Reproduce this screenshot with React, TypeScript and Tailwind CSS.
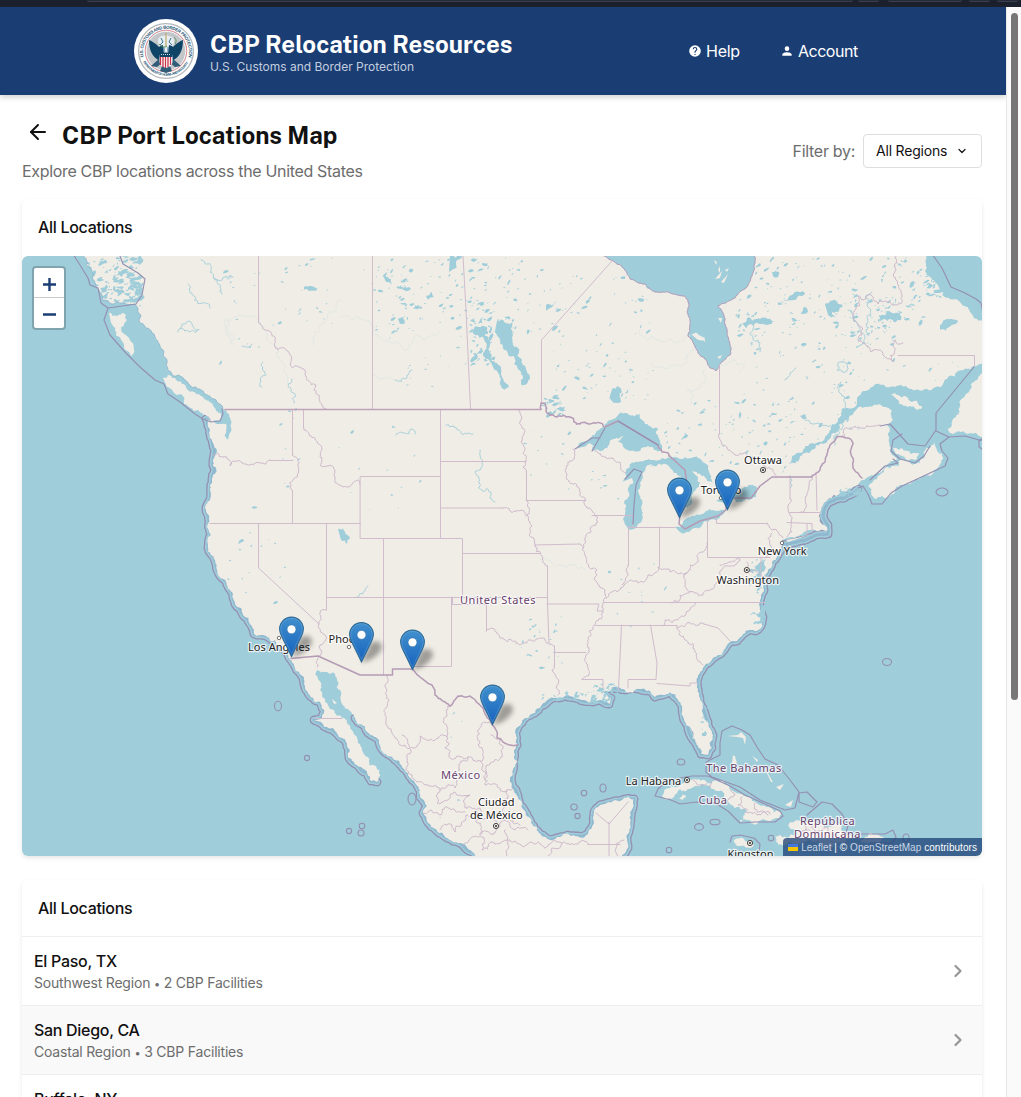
import React from 'react';
import { ArrowLeft, ChevronDown, ChevronRight } from 'lucide-react';

type Pt = [number, number];

const parse = (s: string): Pt[] =>
  s.trim().split(/\s+/).map((p) => p.split(',').map(Number) as Pt);

function makeRandom(seed: number) {
  let s = seed;
  return () => {
    s = (s * 1664525 + 1013904223) % 4294967296;
    return s / 4294967296;
  };
}

// Fractal subdivision of a polyline, for natural coastlines and rivers.
function rough(s: string, amp = 0.22): Pt[] {
  const pts = parse(s);
  const rnd = makeRandom(Math.round(pts[0][0] * 131 + pts[0][1] * 17));
  const out: Pt[] = [pts[0]];
  const split = (a: Pt, b: Pt) => {
    const dx = b[0] - a[0];
    const dy = b[1] - a[1];
    if (Math.hypot(dx, dy) < 2.2) {
      out.push(b);
      return;
    }
    const k = (rnd() - 0.5) * 2 * amp;
    const m: Pt = [(a[0] + b[0]) / 2 - dy * k, (a[1] + b[1]) / 2 + dx * k];
    split(a, m);
    split(m, b);
  };
  for (let i = 1; i < pts.length; i++) split(pts[i - 1], pts[i]);
  return out;
}

const toPath = (pts: Pt[], close = false) =>
  'M' + pts.map((p) => `${p[0].toFixed(1)} ${p[1].toFixed(1)}`).join('L') + (close ? 'Z' : '');

const line = (s: string, amp = 0.22) => toPath(rough(s, amp));
const area = (s: string, amp = 0.22) => toPath(rough(s, amp), true);

const PANHANDLE =
  '83,256 87,266 92,272 95,283 99,290 103,300 113,304 122,303 135,304 138,310 139,320 146,328 152,333 158,342 163,350 167,360 169,371 176,376 186,381 196,387 205,394 214,399 220,404 223,409';
const PUGET = '223,409 229,414 231,424 229,436 227,440 225,434 226,424 222,424 214,422 206,419';
const WEST =
  '206,419 209,428 212,440 213,460 212,480 210,500 206,510 209,522 211,535 208,548 215,560 217,570 226,582 232,592 235,604 243,615 251,625 254,634 266,636 275,640 281,647 288,655 294,664 301,675 305,688 310,696 320,702 324,712 322,718 314,720 325,727 337,734 346,742 349,758 357,765 367,773 371,781 377,782';
const GULF_CALIFORNIA =
  '377,782 380,776 376,766 369,765 362,750 355,735 349,725 342,718 334,710 325,702 320,690 317,670 325,672 337,678 341,695 349,710 355,718';
const PACIFIC_MX =
  '355,718 365,726 368,733 379,740 380,746 392,757 402,767 412,780 420,790 420,797 427,806 423,813 427,821 437,831 447,838 460,843 472,852 480,858';
const CARIBBEAN =
  '622,858 628,848 627,840 629,830 631,820 633,808 634,799 622,800 612,802 600,805 594,812 593,825 588,834 575,836 560,837 550,840 539,833 531,823 525,811 518,797 512,785 513,770 514,752 517,745';
const GULF =
  '517,745 516,735 518,727 524,719 535,713 541,706 553,698 565,696 578,699 592,702 600,700 609,704 611,698 603,692 612,688 625,690 640,689 650,691 655,697 663,695 670,692 678,700 682,706 683,716 688,726 692,738 697,745 701,754 708,755 712,748 713,735 708,722 703,708 699,695 697,685';
const ATLANTIC =
  '697,685 700,673 706,664 715,657 724,650 729,643 737,641 743,634 751,630 756,631 762,623 763,617 760,608 760,600 764,590 763,580 767,573 772,563 778,555 783,545';
const NEW_ENGLAND =
  '783,545 782,540 788,538 800,535 812,530 818,531 827,531 827,527 821,523 819,515 821,510 824,503 830,498 838,495 850,490 858,485 863,480 868,477';
const FUNDY = '868,477 875,474 884,468 894,461 897,459 891,448 889,438 890,428 884,425 880,426';
const LAWRENCE =
  '880,426 889,424 893,420 892,411 882,406 868,407 855,411 845,420 838,431 828,440 814,449 804,453 790,464 781,473 803,452 820,442 832,424 843,408 857,403 862,392 872,387 890,387 910,389 925,389 940,387 955,377 965,369 974,366 984,360';
const LABRADOR = '984,322 974,318 968,307 960,302 945,295 938,285 930,277 926,264 926,254';
const NOVA_SCOTIA =
  '901,459 893,466 880,475 872,483 871,492 877,499 886,498 895,490 909,484 921,477 934,471 943,463 941,455 929,458 920,463 909,461';
const CAPE_BRETON = '924,456 927,448 935,443 937,451 943,459 938,464 928,463';
const NEWFOUNDLAND =
  '985,374 974,382 966,394 960,406 956,416 952,425 948,430 953,434 970,433 985,436';
const VANCOUVER =
  '163,378 172,378 182,384 194,392 204,399 214,407 221,414 221,419 213,421 204,415 194,411 184,404 174,393 167,387';
const HAIDA = '109,313 117,316 126,315 124,325 129,338 134,350 132,356 124,346 116,334 111,323';
const HUDSON =
  '598,254 613,261 625,270 630,279 645,284 655,292 670,293 685,296 688,300 687,312 690,325 688,336 697,350 706,360 710,368 716,371 722,362 730,355 730,345 727,330 724,315 718,306 735,298 746,288 752,276 754,254';

const mainland = toPath(
  [
    PANHANDLE, PUGET, WEST, GULF_CALIFORNIA, PACIFIC_MX, CARIBBEAN, GULF, ATLANTIC,
    NEW_ENGLAND, FUNDY, LAWRENCE, LABRADOR,
  ].flatMap((s) => rough(s)),
  true
);

const CUBA =
  '662,796 670,788 684,783 693,779 704,780 716,780 729,787 741,794 752,801 766,807 782,814 779,818 765,820 748,820 740,822 745,815 747,811 734,808 728,801 724,793 712,789 700,786 695,786 690,789 680,789 674,797 664,798';
const HISPANIOLA =
  '790,822 797,820 806,822 818,823 832,826 846,834 852,838 842,843 822,843 804,842 790,842 776,841 775,836 786,837 797,837 796,830 788,826';
const islands = [
  VANCOUVER, HAIDA, NOVA_SCOTIA, CAPE_BRETON, NEWFOUNDLAND, CUBA, HISPANIOLA,
  '678,798 682,794 686,796 683,800', '734,842 740,838 750,840 754,845 745,847 737,846',
  '891,394 898,395 910,401 922,406 921,409 910,406 899,401', '892,446 899,450 911,454 919,453 917,459 905,458 896,454',
  '860,842 868,836 884,838 880,844', '733,755 737,762 736,765 732,764',
];

const lakes = [
  '575,449 583,442 592,436 600,429 607,423 613,419 619,414 628,414 640,414 645,424 652,428 658,429 659,438 661,451 654,450 648,446 640,451 630,451 623,446 618,441 624,437 616,438 608,446 600,451 592,450 594,446 582,447',
  '622,482 626,472 630,464 638,462 645,460 652,460 659,464 649,467 643,475 640,487 642,505 642,515 640,523 634,529 627,527 625,515 624,502 628,488 632,478',
  '655,462 662,458 672,457 680,459 690,458 702,461 709,472 714,484 707,481 700,474 692,470 698,479 699,487 695,491 692,500 687,508 684,502 686,488 679,476 670,467 662,465',
  '675,527 683,523 692,516 703,514 718,511 727,508 724,513 710,520 701,527 690,531 680,532',
  '716,501 720,497 733,493 740,490 757,488 757,492 752,499 740,502 725,503',
  '497,321 503,320 510,325 513,334 518,348 522,360 527,371 528,382 525,385 521,384 520,371 514,356 508,355 503,346 498,337 495,331',
  '482,334 487,336 488,349 491,360 497,363 501,374 509,386 503,389 500,381 497,371 490,362 485,350 485,342',
  '474,328 487,327 488,334 480,338 473,334',
  '612,389 618,386 622,392 621,402 614,403 610,396',
  '338,529 343,528 347,535 350,538 347,544 341,540',
  '879,315 889,311 900,313 901,320 890,319 881,323',
  '940,325 950,319 958,321 949,327 940,330',
  '742,323 756,319 774,321 768,325 754,325 746,328',
  '780,301 792,295 805,294 795,300', '799,313 805,307 808,311 803,314',
  '825,304 837,302 843,306 832,312 836,318 828,315',
  '426,296 432,292 434,297 428,300', '398,319 403,317 405,323 400,324',
  '700,333 703,330 707,334 703,336', '304,287 311,286 318,289 316,291 304,290',
  '450,256 462,256 457,267 449,272', '383,275 391,279 392,284 386,282',
  '546,305 556,301 553,306 546,311', '800,416 805,414 807,418 803,419',
  '702,733 706,731 706,736 702,736', '772,272 779,272 778,277 773,276',
];

// Lake-strewn regions: x, y, width, height, count, largest size.
const specklands: number[][] = [
  [372, 258, 170, 75, 150, 2.6], [540, 275, 110, 70, 50, 2], [470, 300, 25, 65, 60, 3],
  [545, 350, 110, 60, 50, 2], [541, 395, 22, 20, 34, 2.6], [735, 258, 110, 80, 90, 2.3],
  [840, 258, 85, 70, 80, 2.2], [740, 330, 120, 110, 75, 2.1], [270, 258, 100, 70, 24, 1.8],
  [665, 400, 130, 65, 70, 2], [850, 300, 45, 50, 50, 2.2], [925, 262, 30, 35, 90, 3.4],
  [120, 256, 22, 50, 80, 3.6], [85, 258, 40, 44, 80, 3.4], [220, 256, 40, 110, 16, 1.6],
  [380, 330, 90, 75, 14, 1.7], [520, 430, 50, 60, 10, 2], [590, 470, 30, 30, 8, 1.7],
  [225, 500, 60, 110, 18, 2], [330, 410, 90, 100, 12, 1.6], [520, 610, 50, 60, 22, 2],
  [590, 684, 28, 18, 50, 2.6], [540, 692, 60, 8, 24, 2.6], [700, 690, 8, 40, 8, 1.7],
  [840, 488, 28, 8, 40, 2.6], [750, 560, 16, 34, 30, 2.6], [280, 400, 20, 100, 10, 1.8],
  [600, 560, 70, 80, 12, 1.5], [860, 345, 100, 36, 12, 1.8], [400, 700, 100, 130, 10, 1.6],
];

const specks = (() => {
  const rnd = makeRandom(4242);
  let d = '';
  for (const [x, y, w, h, n, big] of specklands) {
    for (let i = 0; i < n; i++) {
      const cx = x + rnd() * w;
      const cy = y + rnd() * h;
      const size = 0.6 + rnd() * rnd() * big;
      const tilt = rnd() * 1.6 - 1.2;
      const steps = 7;
      for (let k = 0; k < steps; k++) {
        const a = (k / steps) * Math.PI * 2;
        const r = size * (0.4 + rnd() * 0.9);
        const px = Math.cos(a) * r * 1.5;
        const py = Math.sin(a) * r * 0.7;
        const qx = cx + px * Math.cos(tilt) - py * Math.sin(tilt);
        const qy = cy + px * Math.sin(tilt) + py * Math.cos(tilt);
        d += `${k ? 'L' : 'M'}${qx.toFixed(1)} ${qy.toFixed(1)}`;
      }
      d += 'Z';
    }
  }
  return d;
})();

const rivers = [
  '201,260 210,272 214,279 218,284 222,294', '214,278 224,277 233,277', '188,284 192,293 202,303 210,308',
  '178,332 183,324 191,322 199,329 190,332 180,329', '242,346 252,344', '262,387 266,375 263,362', '294,403 291,389 292,379',
  '395,380 407,378 412,370', '396,435 404,433 412,429 415,434', '446,425 454,426 461,433 473,434',
  '480,450 482,464 479,483 491,492 495,502', '835,445 842,420 845,408 842,396 841,382', '842,362 847,364 847,370 842,372 837,370 838,364 842,362',
  '785,380 790,373 796,368', '804,417 818,423 832,427', '790,476 790,488', '453,776 467,778', '357,597 364,592 368,586',
  '848,310 857,323 862,333 857,347', '750,318 753,340 760,352', '868,335 867,305 872,292',
];
const faintRivers = [
  '340,317 360,319 374,327 391,343 408,350 416,335 440,331', '228,318 226,330 233,345 228,320 240,315 262,325 275,345 285,365 290,390',
  '313,345 320,325 336,310 341,300', '640,330 660,340 690,336', '650,362 668,369 690,352 697,350', '740,373 745,365 720,364',
  '690,405 687,390 705,370', '372,375 395,380', '540,560 560,565 585,570',
];

const straightBorders =
  'M225 409.5H541 M258.5 256V322 M372.5 256V409 M463 256L466 310L470.5 409 M612 261L541.5 340V404 M719.5 365V434 M898 355.5H974.5V366 ' +
  'M292.5 410V455 M292.5 491V523.5 M270 460.5H293 M210 523.5H360.5 M303.5 410V427 M360.5 476.5H440.5V538.5H360.5Z M440.5 410V476 ' +
  'M440.5 461.5H526 M440.5 508H502 M440.5 538.5H462.5V597.5 M462.5 553.5H540 M258.5 523.5V568L319 624 M326.5 523.5V610 ' +
  'M326.5 597.5H547 M383.5 538.5V675 M451.5 597.5V666.5H412 M452.5 597V604.5H486.5V631 M547.5 566V604L549 643 M547 604H599L597 611H603 ' +
  'M554.5 646V666 M554 652.5H586 M526.5 472V500.5H586 M535 545L580 544 M592 515.5H633V527 M628.5 527V565 M659.5 527V567 M628 527.5H675 ' +
  'M707.5 518V557.5H770 M604 602.5H765 M596 625.5H677 M582 679.5H603V688 M621.5 625L618.5 690 M650.5 625L657 663L656 679.5H628V688 ' +
  'M657 683.5L690 686V683H697 M716.5 517V523.5H767 M761 557V576L768 577 M790 476L790 498 M790 512.5H820 M787 522.5L812 523.5V532 M807 524V534 ' +
  'M816 472L817 510 M315 718.5H342 M704 624L718 628L730 641 M609 822V856 M588 844.5H620 M596 813L609 824L628 802';

const wiggles = [
  '258.5,322 265,330 275,337 290,355 305,373 316,385 320,400 326,409', '212,456 223,457 230,466 250,465 270,460',
  '292.5,455 298,466 293,480 290,487 292.5,491', '303.5,427 310,436 322,450 320,465 328,466 335,478 340,485 352,484 357,480 360,484',
  '502,508 510,511 520,511 526,516', '326,610 320,611 319,623 325,635 320,645 318,656', '486,631 500,638 515,641 530,640 548,643 554,646',
  '554,666 559,680 558,695', '518,410 521,425 523,445 526,461 523,467 526,472', '526,500 527,515 530,530 535,545 542,556 547,566',
  '573,449 574,459 568,465 568,480 580,490 585,500 587,508 598,522 590,533 586,542 583,548',
  '580,544 583,548 585,555 597,570 595,580 605,590 607,598 603,610 595,625 588,640 586,655 588,665 582,679',
  '595,451 605,457 620,462 626,473', '628,565 628,575 622,585', '608,597 617,592 625,584 638,583 648,575 658,567 670,572 680,573 687,573 690,565 698,558 705,550 707,543',
  '687,573 685,582 695,593 710,590 720,575 735,565 740,559 730,562 720,565', '747,562 760,575', '672,603 690,592', '695,603 690,610 665,620 664,625',
  '677,627 685,640 695,652 703,665', '677,627 690,623 704,624', '767,523 772,530 783,538', '772,533 770,545 772,553 765,558',
  '790,498 788,512 787,537', '812,475 808,490 801,512', '719,434 722,445 735,455 755,459 770,468 776,475',
  '896,256 896,270 898,285 902,295 897,305 885,301 878,304 868,295 862,300 858,296 860,305 853,312 859,325 862,335 858,340 867,346 871,352 883,355 893,362 895,350 894,340 903,343',
  '845,437 847,428 863,428 880,425',
  '318,658 317,667', '387,675 386,688 389,700 385,715 388,728 395,738 405,745 411,750 407,762', '402,735 413,748 420,736 435,740 447,737 443,722 446,710 452,705',
  '447,737 450,758 468,757 480,761 478,745 478,730 485,722 491,722', '407,762 412,775 425,785 440,790 455,788 460,770 468,757',
  '440,790 437,803 448,800 455,792 470,795 465,808 480,808 476,820', '480,761 486,773 485,785 500,790 507,790 513,788', '491,735 503,748 490,763 485,780',
  '423,814 440,815 448,808 465,812', '440,830 452,825 455,832 466,815 476,822 480,835 495,833 505,820 515,830 528,830', '463,845 480,836 482,850 500,843 510,840 530,842 545,848',
  '507,790 503,805 510,820 520,825', '475,810 483,820 490,815 497,822', '505,830 508,845 507,856', '545,848 555,840 562,843', '548,856 553,848 570,845 588,844',
  '618,856 617,843 624,840', '693,780 700,785 707,783', '712,781 710,788', '730,790 735,795 728,800', '742,797 738,805 748,810', '755,803 757,812 768,815', '745,812 757,815 770,814',
  '803,822 806,830 800,836 810,842', '812,823 815,831 822,834 818,842', '806,830 815,831 828,828 834,838',
];

const national =
  line('541,409 541,403 545,404 547,413 560,416 570,417 580,424 590,424 605,427', 0.28) +
  'M605 427L618 421L658 445' +
  line('658,445 662,452 668,453 675,461', 0.2) +
  'M675 461L685 470L687 485L686 505L680 515L679 524L685 529L700 521L718 516L726 510L726 498H751L760 486L772 477H812' +
  line('812,476 820,470 825,462 827,455 832,443 837,437 848,438 853,443 853,468 862,478', 0.14) +
  'M291 658.5L318 656L360 675H392.5V669H412' +
  line('412,669 420,677 432,685 435,695 450,706 458,696 470,696 480,705 485,714 491,722 497,738 518,745', 0.12);

const maritime =
  'M73 254L80 265L88 278L90 285L98 288L101 303L108 308L104 320L110 335L125 352L140 367L155 380L164 384L168 394L180 402L195 414L203 419L211 422L220 421L223 414L222 409' +
  'M120 256L123 264L138 273L145 279L142 295L136 304L108 308' +
  'M655 796L658 789L667 781L680 778L692 776L708 776L730 786L745 795L765 804L780 811L783 816L775 822L755 822L740 823L728 811L715 803L697 802L680 804L671 800Z' +
  'M722 731L732 726L742 730L750 735L757 747L765 759L778 765L790 780L799 792L795 808L785 810L760 800L740 787L712 777L706 772L706 762L720 755V743Z' +
  'M799 793L807 792L817 802L813 807L799 802Z M807 815L822 802L832 804L842 814L848 825L845 838 M861 834H885L893 830L896 837L892 843H870' +
  'M618 421L658 445 M592 451L605 428 M575 449L592 438H600 M633 524L634 505L636 485L642 472L634 469L625 479' +
  'M974 367L936 413V430L925 446L908 444L899 434L890 424L880 426 M936 431L949 437L940 444L942 451L948 458L945 466L930 473L915 480L902 486L891 493L882 504H872L868 494L863 486L858 488' +
  'M949 437L965 436L979 440L985 438 M985 439L979 441V447L985 451 M893 459L898 463L885 466L870 480 M902 434L893 440L891 451L900 459L915 463L924 456L930 446' +
  'M932 254L942 268L951 287L965 293L976 299L981 303L983 313 M730 842L732 836L740 835L754 838L760 844L759 853';

const mapCircles: number[][] = [
  [887, 662, 4.5, 3.5], [278, 706, 3.5, 4.8], [307, 758, 2.6, 2.6], [349, 831, 2.6, 2.6], [362, 826, 2.8, 2.8], [361, 833, 3, 3],
  [681, 762, 3.8, 3], [584, 793, 2.8, 2.8], [603, 788, 3, 4], [574, 807, 3.2, 3], [577.5, 816, 2.6, 2.6], [699, 827, 4.4, 3.4],
  [715, 822, 5, 2.8], [669, 850, 2.8, 2.8], [771, 838, 2.8, 2.8], [906, 838, 3, 4], [412, 799, 4, 6], [942, 492, 6, 4],
];

type Label = { text: string; x: number; y: number; kind?: 'country' };
const labels: Label[] = [
  { text: 'Ottawa', x: 763, y: 463.5 }, { text: 'Toronto', x: 721, y: 494 }, { text: 'New York', x: 782.3, y: 554.5 },
  { text: 'Washington', x: 747.8, y: 584 }, { text: 'Los Angeles', x: 279, y: 651 }, { text: 'Phoenix', x: 349.5, y: 643 },
  { text: 'Ciudad', x: 496.3, y: 806 }, { text: 'de México', x: 496.3, y: 819 }, { text: 'La Habana', x: 653.5, y: 784.5 },
  { text: 'Kingston', x: 750.5, y: 857.5 },
  { text: 'United States', x: 498, y: 604, kind: 'country' }, { text: 'México', x: 460.8, y: 779, kind: 'country' },
  { text: 'The Bahamas', x: 744, y: 772, kind: 'country' }, { text: 'Cuba', x: 713, y: 804, kind: 'country' },
  { text: 'República', x: 827.5, y: 825, kind: 'country' }, { text: 'Dominicana', x: 827.5, y: 838, kind: 'country' },
];
const capitals: Pt[] = [[763, 470], [746.8, 570], [496, 826], [687, 780], [750, 843]];
const cities: Pt[] = [[782, 543], [721, 498], [279, 638], [349, 647]];
const pins: Pt[] = [[679.5, 518], [727.5, 510], [291.5, 657], [361.5, 662.5], [412.5, 670], [492.5, 725]];

const coastBuffers = [WEST, PACIFIC_MX, CARIBBEAN, GULF, ATLANTIC, '783,545 800,541 816,535 828,534 828,525 824,519 824,510 828,503 836,499 850,495 858,489'].map((s) => line(s, 0.1));

function LocationsMap() {
  return (
    <svg className="block h-[600px] w-full" viewBox="22 256 960 600" role="img" aria-label="Map of CBP port locations">
      <defs>
        <linearGradient id="pin" x1="0" y1="0" x2="0" y2="1">
          <stop offset="0" stopColor="#4190ce" />
          <stop offset="1" stopColor="#1562bd" />
        </linearGradient>
        <filter id="soft" x="-50%" y="-50%" width="200%" height="200%">
          <feGaussianBlur stdDeviation="2.6" />
        </filter>
      </defs>
      <rect x="22" y="256" width="960" height="600" fill="#9fcdd9" />
      <g fill="none" strokeLinejoin="round" strokeLinecap="round">
        {coastBuffers.map((d, i) => <path key={i} d={d} stroke="#9490b3" strokeWidth="8.8" />)}
        {coastBuffers.map((d, i) => <path key={i} d={d} stroke="#9fcdd9" strokeWidth="6.2" />)}
        {coastBuffers.map((d, i) => <path key={i} d={d} stroke="#90b9d0" strokeWidth="3" />)}
      </g>
      <g fill="#f0ede6">
        <path d={mainland} />
        {islands.map((s) => <path key={s} d={area(s, 0.3)} />)}
        <path d="M786 540L797 538L812 534L800 538L788 542Z" />
      </g>
      <g fill="#9fcdd9">
        <path d={area(HUDSON, 0.12)} />
        {lakes.map((s) => <path key={s} d={area(s, 0.26)} />)}
        <path d={specks} />
        <path d={area('763,560 766,568 761,577 762,588 756,590 758,575 755,569 759,563', 0.3)} />
        <path d={area('766,605 752,612 750,616 761,617 753,624 764,624', 0.3)} />
      </g>
      <g fill="#f0ede6">
        <path d={area('691,334 697,333 705,338 706,343 698,340', 0.2)} />
        <path d="M714 260L717 262L716 265ZM718 270L720 266L720 273ZM715 279L722 271L720 278ZM721 282L728 274L724 283ZM725 270L729 268L727 272Z" />
        <path d={area('641,474 646,467 652,464 650,470 645,476', 0.2)} />
        <path d="M727 736L738 735L741 732L746 737L745 745L743 738L738 737ZM752 756L758 760L757 762ZM764 767L773 782L771 782ZM776 787L784 784L780 790ZM785 805L793 800L791 807Z" />
        <path d="M332 699L337 703L334 704ZM344 703L347 707L345 709ZM718 318H722L721 323ZM717 357L722 355L720 359Z" />
      </g>
      <g fill="none" strokeLinejoin="round" strokeLinecap="round">
        {rivers.map((s) => <path key={s} d={line(s, 0.35)} stroke="#a9d1db" strokeWidth="1" />)}
        {faintRivers.map((s) => <path key={s} d={line(s, 0.3)} stroke="#e0e6e3" strokeWidth="0.9" />)}
        <path d={toPath(rough(HUDSON, 0.12))} stroke="#b09ab8" strokeWidth="1" />
        <path d={toPath(rough(PANHANDLE))} stroke="#8fb4cb" strokeWidth="0.8" />
        <path d={straightBorders} stroke="#d0bccd" strokeWidth="1" />
        {wiggles.map((s) => <path key={s} d={line(s, 0.3)} stroke="#c9b3c8" strokeWidth="0.9" />)}
        <path d="M225 409.5H541" stroke="#bea3bb" strokeWidth="1.6" />
        <path d={national} stroke="#b59bb6" strokeWidth="1.5" />
        <path d={maritime} stroke="#9490b3" strokeWidth="1.15" />
        {mapCircles.map(([cx, cy, rx, ry]) => (
          <ellipse key={`${cx}-${cy}`} cx={cx} cy={cy} rx={rx} ry={ry} stroke="#9490b3" strokeWidth="1.1" />
        ))}
      </g>
      {cities.map(([x, y]) => <circle key={x} cx={x} cy={y} r="1.7" fill="#fff" stroke="#555" strokeWidth="0.8" />)}
      {capitals.map(([x, y]) => (
        <g key={x}>
          <circle cx={x} cy={y} r="2.6" fill="#f5f2ec" stroke="#333" strokeWidth="0.9" />
          <circle cx={x} cy={y} r="1.1" fill="#333" />
        </g>
      ))}
      <g
        className="font-['Noto_Sans',sans-serif] text-[11px]"
        textAnchor="middle"
        stroke="#fff"
        strokeOpacity="0.75"
        strokeWidth="2.4"
        strokeLinejoin="round"
        paintOrder="stroke"
      >
        {labels.map((l) => (
          <text key={l.text} x={l.x} y={l.y} fill={l.kind ? '#68416d' : '#222'} letterSpacing={l.kind ? 0.52 : 0.04}>
            {l.text}
          </text>
        ))}
      </g>
      {pins.map(([x, y]) => (
        <path key={x} d={`M${x} ${y}L${x + 9} ${y - 20}Q${x + 22} ${y - 24} ${x + 20} ${y - 13}Q${x + 13} ${y - 2} ${x} ${y}Z`} fill="#000" opacity="0.34" filter="url(#soft)" />
      ))}
      {pins.map(([x, y]) => (
        <g key={x} transform={`translate(${x - 12.5} ${y - 40.5})`}>
          <path d="M12.5 .6C5.8 .6 .6 6 .6 12.6c0 3.2 1.2 5.7 2.6 8.4L12.5 40l9.3-19c1.4-2.7 2.6-5.2 2.6-8.4C24.4 6 19.2 .6 12.5 .6Z" fill="url(#pin)" stroke="#2e6c97" strokeWidth="1.1" />
          <path d="M12.5 1.8C6.4 1.8 1.8 6.6 1.8 12.6c0 2.9 1 5.2 2.5 7.9l8.2 16.8 8.2-16.8c1.5-2.7 2.5-5 2.5-7.9 0-6-4.6-10.8-10.7-10.8Z" fill="none" stroke="#fff" strokeOpacity="0.14" />
          <circle cx="12.5" cy="12.8" r="4.4" fill="#fff" stroke="#2e6c97" strokeOpacity="0.6" strokeWidth="0.8" />
        </g>
      ))}
    </svg>
  );
}

function Seal() {
  return (
    <svg className="size-16 shrink-0" viewBox="0 0 64 64" aria-label="CBP seal">
      <defs>
        <path id="sealTop" d="M9.6 38A23 23 0 1 1 54.4 38" />
        <path id="sealBottom" d="M7.8 39A25.4 25.4 0 0 0 56.2 39" />
      </defs>
      <circle cx="32" cy="32" r="32" fill="#fff" />
      <circle cx="32" cy="32" r="27.4" fill="#fff" stroke="#b4b8bc" strokeWidth="1.3" />
      <circle cx="32" cy="32" r="20.8" fill="#c3c7ca" stroke="#e0838d" strokeWidth="0.9" />
      <circle cx="32" cy="32" r="19.7" fill="none" stroke="#fff" strokeWidth="0.8" />
      <g className="font-['Liberation_Sans',sans-serif] text-[4.4px] font-bold" fill="#1d5375">
        <text><textPath href="#sealTop" textLength="83">U.S. CUSTOMS AND BORDER PROTECTION</textPath></text>
        <text className="text-[3.4px]"><textPath href="#sealBottom" startOffset="4" textLength="55">DEPARTMENT OF HOMELAND SECURITY</textPath></text>
      </g>
      <path d="M15 21c0 10 3 17 11 21l3 2h6l3-2c8-4 11-11 11-21-3 1-6 3-10 7-2-2-4-3-7-3s-5 1-7 3c-4-4-7-6-10-7Z" fill="#0f4467" />
      <path d="M26 39l-9 8 6 1 6-5ZM38 39l9 8-6 1-6-5ZM28 47h8l2 5-6 2-6-2Z" fill="#315d78" />
      <path d="M24 22c0-4 4-6 7-5l1-2 2 2c4 0 7 3 6 6l-1 4-4-1-1 9h-4l-1-9-4 1Z" fill="#e6eef2" />
      <path d="M27 19l2 4-3 3M37 19l-2 4 3 3M30 28v5M34 28v5" fill="none" stroke="#3f7290" strokeWidth="1" />
      <path d="M32 14v14" stroke="#b99a50" strokeWidth="1" />
      <path d="M25 25c2 3 5 4 8 2M40 18c2 2 3 4 1 7" fill="none" stroke="#57905b" strokeWidth="0.9" />
      <path d="M25.500 36h13v6c0 4-3 6-6.500 7-3.500-1-6.500-3-6.500-7Z" fill="#fff" />
      <path d="M26.500 38v8M29 38v10M31.500 38v11M34 38v10M36.500 38v8" stroke="#c83248" strokeWidth="1.3" />
      <path d="M25.500 33.500h13V38h-13Z" fill="#0f4467" />
      <path d="M27 35.500h10" stroke="#fff" strokeWidth="0.8" strokeDasharray="1 1" />
    </svg>
  );
}

const locations = [
  { name: 'El Paso, TX', detail: 'Southwest Region • 2 CBP Facilities' },
  { name: 'San Diego, CA', detail: 'Coastal Region • 3 CBP Facilities' },
  { name: 'Buffalo, NY', detail: 'Northern Region • 2 CBP Facilities' },
];

export default function App() {
  return (
    <div className="flex h-[1097px] w-[1021px] flex-col overflow-hidden bg-white font-['Inter',sans-serif] text-[#111]">
      <div className="flex h-[7px] shrink-0 items-start gap-[5px] bg-[#1b202d] pl-[87px]">
        <div className="h-[2px] w-[766px] rounded-b-sm border-b border-[#393e51] bg-[#252a38]" />
        <div className="h-[2px] w-[21px] rounded-b-sm border-b border-[#393e51] bg-[#252a38]" />
        <div className="ml-1 h-[2px] w-[74px] rounded-b-sm border-b border-[#393e51] bg-[#252a38]" />
        <div className="ml-0.5 h-[2px] w-[21px] rounded-b-sm border-b border-[#393e51] bg-[#252a38]" />
        <div className="ml-0.5 h-[2px] w-[21px] rounded-b-sm border-b border-[#393e51] bg-[#252a38]" />
      </div>

      <div className="flex min-h-0 flex-1">
        <div className="w-[1006px] shrink-0 overflow-hidden">
          <header className="relative flex h-[88px] items-center bg-[#1a3d74] pl-[134px] text-white shadow-[0_2px_6px_rgba(0,0,0,0.2)]">
            <Seal />
            <div className="ml-3 w-[478px] pt-[2px]">
              <h1 className="font-['Public_Sans','Inter',sans-serif] text-2xl leading-[28px] font-bold tracking-[0px] whitespace-nowrap">CBP Relocation Resources</h1>
              <p className="mt-px text-xs leading-4 tracking-[0px] text-[#c4cede]">U.S. Customs and Border Protection</p>
            </div>
            <nav className="flex items-center text-base">
              <a className="flex items-center gap-1">
                <svg className="size-[14px]" viewBox="0 0 24 24" fill="currentColor">
                  <path d="M12 2a10 10 0 1 0 0 20 10 10 0 0 0 0-20Zm1 17h-2v-2h2Zm2.070-7.750-.9.920C13.450 12.900 13 13.500 13 15h-2v-.5c0-1.100.450-2.100 1.170-2.830l1.240-1.260c.370-.360.590-.860.590-1.410a2 2 0 1 0-4 0H8a4 4 0 1 1 8 0c0 .880-.360 1.680-.930 2.250Z" />
                </svg>
                <span className="tracking-[-0.25px]">Help</span>
              </a>
              <a className="ml-10 flex items-center gap-1">
                <svg className="size-[14px]" viewBox="0 0 24 24" fill="currentColor">
                  <path d="M12 12a4 4 0 1 0 0-8 4 4 0 0 0 0 8Zm0 2c-2.670 0-8 1.340-8 4v2h16v-2c0-2.660-5.330-4-8-4Z" />
                </svg>
                <span className="tracking-[-0.45px]">Account</span>
              </a>
            </nav>
          </header>

          <main className="pt-[24px] pr-6 pl-[22px]">
            <div className="flex h-[64px] items-center justify-between">
              <div>
                <div className="flex items-center">
                  <ArrowLeft className="mb-[6px] ml-[4px] size-6" strokeWidth={2} />
                  <h2 className="ml-3 font-['Public_Sans','Inter',sans-serif] text-2xl leading-8 font-bold tracking-[0px] whitespace-nowrap">CBP Port Locations Map</h2>
                </div>
                <p className="mt-2 text-base leading-6 tracking-[-0.33px] text-[#6d6d6d]">Explore CBP locations across the United States</p>
              </div>
              <div className="flex items-center gap-2">
                <span className="text-base tracking-[-0.3px] text-[#6d6d6d]">Filter by:</span>
                <button className="flex h-[34px] w-[119px] items-center justify-between rounded-[4px] border border-[#dedede] pr-[13px] pl-3 text-sm tracking-[-0.2px]">
                  All Regions
                  <ChevronDown className="size-3" strokeWidth={2.4} />
                </button>
              </div>
            </div>

            <section className="mt-4 rounded-md shadow-[0_2px_4px_rgba(0,0,0,0.1)]">
              <h3 className="flex h-[57px] items-center px-4 pb-[2px] text-base font-medium tracking-[-0.3px]">All Locations</h3>
              <div className="relative h-[600px] overflow-hidden rounded-md">
                <LocationsMap />
                <div className="absolute top-[10px] left-[10px] flex w-[34px] flex-col overflow-hidden rounded-[4px] border-2 border-[#7fa4ae] bg-white text-[#1a3d74]">
                  <button aria-label="Zoom in" className="flex h-[30px] items-center justify-center border-b border-[#ccc] pt-1">
                    <svg className="size-[13px]" viewBox="0 0 13 13"><path d="M6.500 0V13M0 6.500H13" stroke="currentColor" strokeWidth="2.400" /></svg>
                  </button>
                  <button aria-label="Zoom out" className="flex h-[30px] items-center justify-center pt-[3px]">
                    <svg className="size-[13px]" viewBox="0 0 13 13"><path d="M0 6.500H13" stroke="currentColor" strokeWidth="2.400" /></svg>
                  </button>
                </div>
                <div className="absolute right-0 bottom-0 flex h-[18px] items-center rounded-tl-[4px] bg-[#1a3d74]/75 px-[5px] font-['Liberation_Sans',sans-serif] text-[10px] tracking-[0.05px] whitespace-pre text-white">
                  <span className="mr-[3px] flex h-[7px] w-[10px] flex-col"><i className="h-1/2 bg-[#4475dd]" /><i className="h-1/2 bg-[#f2c500]" /></span>
                  <span className="text-[#c9d5e6]">Leaflet</span> | © <span className="text-[#c9d5e6]">OpenStreetMap</span> contributors
                </div>
              </div>
            </section>

            <section className="mt-6 rounded-md shadow-[0_2px_4px_rgba(0,0,0,0.1)]">
              <h3 className="flex h-[57px] items-center border-b border-[#eee] px-4 text-base font-medium tracking-[-0.3px]">All Locations</h3>
              <ul>
                {locations.map((l) => (
                  <li key={l.name} className="flex h-[69px] items-center justify-between border-b border-[#eee] px-3 even:bg-[#f9f9f9]">
                    <div>
                      <p className="text-base leading-6 font-medium tracking-[-0.3px]">{l.name}</p>
                      <p className="text-sm leading-5 tracking-[-0.2px] text-[#6d6d6d]">{l.detail.split('•')[0]}<span className="text-[11px]">•</span>{l.detail.split('•')[1]}</p>
                    </div>
                    <ChevronRight className="mr-[2px] size-5 text-[#969696]" strokeWidth={2.6} />
                  </li>
                ))}
              </ul>
            </section>
          </main>
        </div>
        <div className="flex w-[15px] flex-col items-center border-l border-[#e8e8e8] bg-[#fafafa] pt-[6px]">
          <div className="h-[687px] w-[7px] rounded-full bg-[#777]" />
        </div>
      </div>
    </div>
  );
}
